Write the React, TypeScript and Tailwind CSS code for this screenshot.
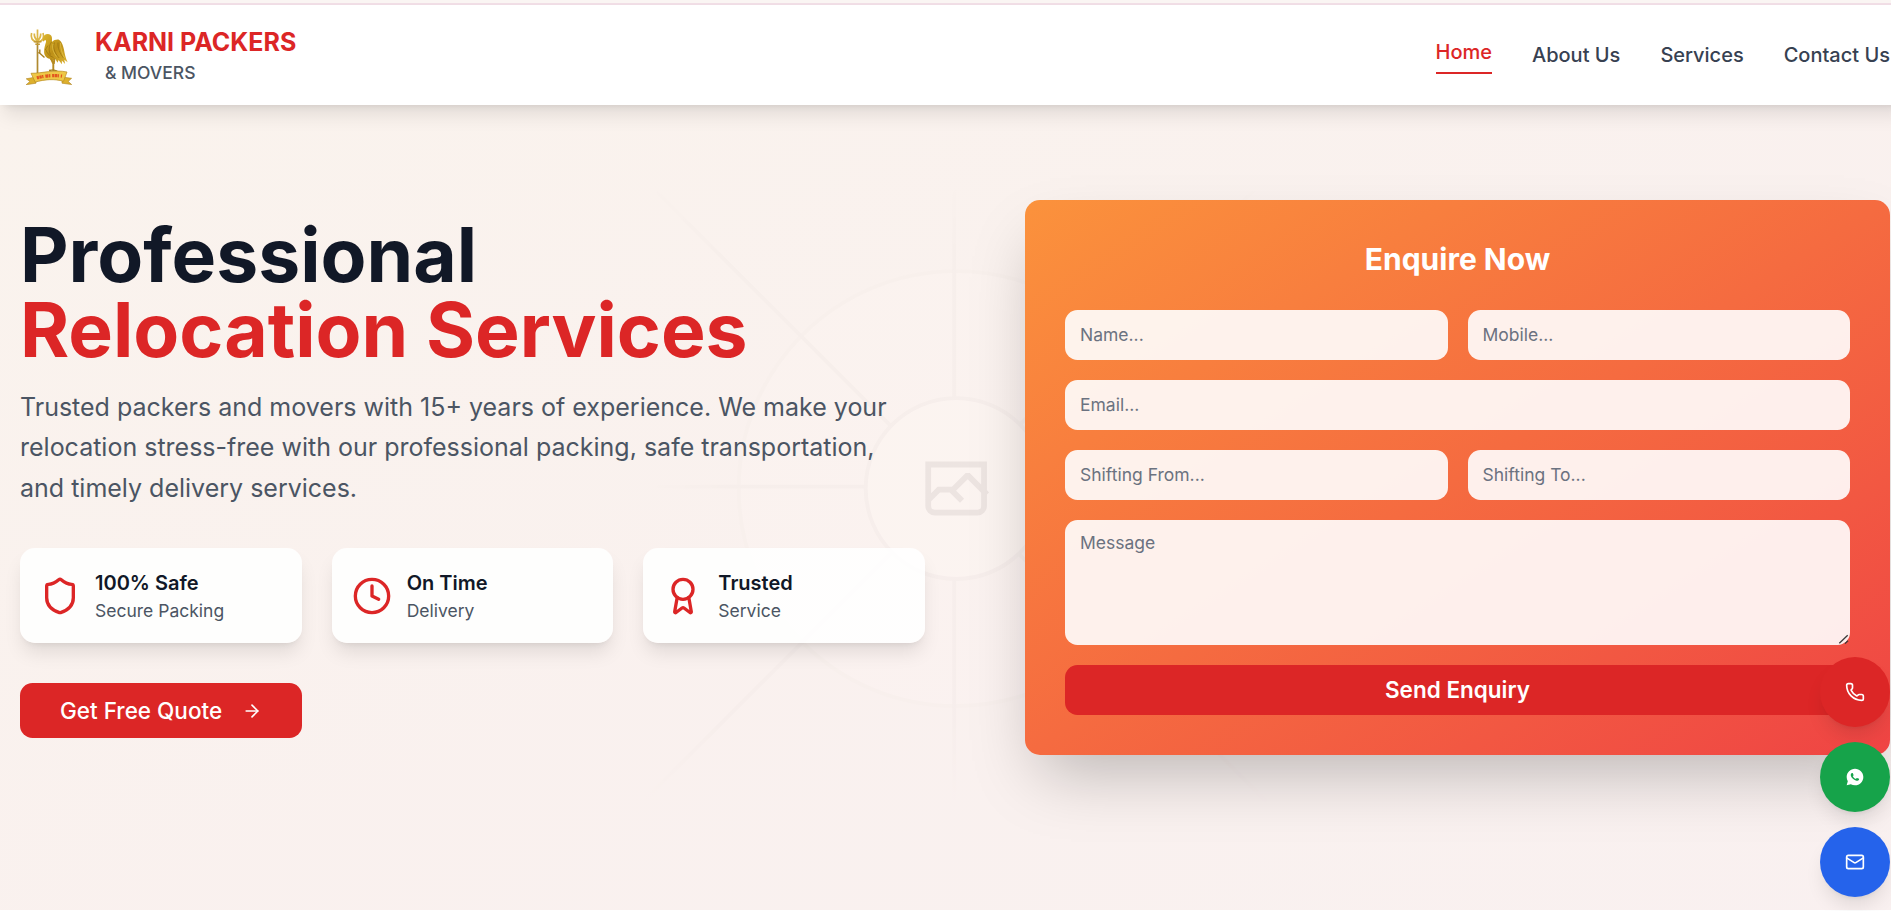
import { ArrowRight, Award, Clock, Mail, Phone, Shield } from 'lucide-react';
import type { LucideIcon } from 'lucide-react';
import { RiWhatsappFill } from 'react-icons/ri';

function Logo() {
  return (
    <svg viewBox="0 0 60 60" className="size-12 shrink-0" fill="none">
      <defs>
        <linearGradient id="gold" x1="0" y1="0" x2="1" y2="1">
          <stop offset="0" stopColor="#dcb52e" />
          <stop offset="0.5" stopColor="#bd9017" />
          <stop offset="1" stopColor="#dcb230" />
        </linearGradient>
      </defs>
      <path d="M17.500 15v33" stroke="#b08a30" strokeWidth="1.700" />
      <path
        d="M11.600 8c-1.200 4.500.4 8.600 5.900 8.800 5.500-.2 7.100-4.300 5.500-8.800M14.300 8.500c-.2 3.500 1.100 5.500 3.200 7.500 2.100-2 3.400-4 3.200-7.500M17.500 4.500v13"
        stroke="#dcb646"
        strokeWidth="1.700"
      />
      <path d="M13.800 16.800h7.600M15.300 19.300h4.600" stroke="#c29a36" strokeWidth="1.500" />
      <path
        d="M23 13.500c.1-3 2.300-4.700 5-4.600 2.800.2 4.200 2.200 4 5 0 1.300-.2 2 .2 2.900 1.600-1.600 3.500-2.400 6.300-2.200 2.900 1.400 4.400 5.200 5.400 9.600.8 4.200 1.600 8.600 3.700 13l-3.300-2.500.8 4.300-3.300-3.400.2 3.600-3.500-4.100-.9 2.600-2.300-3.700c-1.300 1-2.300 1.900-2.900 3.300l-2.800-3.500c-3.200-.8-5.400-3.500-5.500-6.900-.1-3.700 1-7 1.900-9.900.2-1.300-.1-1.900-.8-2.100l-2.300 1.900.1-3.300Z"
        fill="url(#gold)"
      />
      <path
        d="M31.500 17c-2.500 3.600-3.200 8.200-1 12.500M34.500 17.500c-1.800 5-.3 10 4.700 15.500M38 17.500c-.5 5.500 2 11 5.500 15.500M25.500 24c1.500 4.500 4 7 8 8.500M28 20.500l-2.500 4"
        stroke="#8a650b"
        strokeWidth="0.900"
        opacity="0.600"
      />
      <path d="M40.500 18c-.2 5 1.500 10 4 15M33 19c-1 4 0 8 3.500 12.500" stroke="#ecd05a" strokeWidth="0.700" opacity="0.800" />
      <path d="M31 33.500 33.300 39v7M34.500 33l-.7 6" stroke="#b58a20" strokeWidth="1.900" />
      <path d="M29 45.500l4.300-.6 4 1.300M24.500 32.500l-4.700-4.200v-3.800M20 28.500l-1.800-1" stroke="#a88022" strokeWidth="1.400" />
      <path d="M6.200 53.800 16 52v6.200l-9.900 1.600 3.800-3.400-3.700-2.600ZM51.600 53.300 42 52v6.200l9.700 1.400-3.500-3.200 3.400-3.100Z" fill="#ddb02c" stroke="#b08423" strokeWidth="0.600" />
      <path d="M11 48.300c11.500 0 23.500-4 36-1.300l-3.500 9.300c-9-2.600-18.500-2-28.300.8L11 48.300Z" fill="#eec746" stroke="#b88b22" strokeWidth="0.700" />
      <path d="M16.800 52.800c8-1.900 16.500-2.900 25.200-1.600" stroke="#e2571f" strokeWidth="3.200" strokeDasharray="2.200 .5 2.400 .4 1.300 1.900 2.800 .5 1.700 1.800" />
    </svg>
  );
}

const CIRCLE_OUTER =
  'M600.709 736.5c-75.454 0-136.621-61.167-136.621-136.62 0-75.454 61.167-136.621 136.621-136.621 75.453 0 136.62 61.167 136.62 136.621 0 75.453-61.167 136.62-136.62 136.62Z';
const CIRCLE_INNER =
  'M600.709 656.704c-31.384 0-56.825-25.441-56.825-56.824 0-31.384 25.441-56.825 56.825-56.825 31.383 0 56.824 25.441 56.824 56.825 0 31.383-25.441 56.824-56.824 56.824Z';

function FadeStops() {
  return (
    <>
      <stop stopColor="#C9C9C9" stopOpacity="0" />
      <stop offset=".14" stopColor="#C9C9C9" />
      <stop offset=".86" stopColor="#C9C9C9" />
      <stop offset="1" stopColor="#C9C9C9" stopOpacity="0" />
    </>
  );
}

function HeroBackdrop() {
  return (
    <svg
      viewBox="0 0 1200 1200"
      preserveAspectRatio="xMidYMid slice"
      className="absolute inset-0 size-full opacity-20"
      fill="none"
    >
      <defs>
        <linearGradient id="fa" x1="404" y1="796" x2="796" y2="404" gradientUnits="userSpaceOnUse"><FadeStops /></linearGradient>
        <linearGradient id="fb" x1="796.912" y1="599" x2="404.507" y2="599" gradientUnits="userSpaceOnUse"><FadeStops /></linearGradient>
        <linearGradient id="fc" x1="600" y1="403.677" x2="600" y2="796.082" gradientUnits="userSpaceOnUse"><FadeStops /></linearGradient>
        <linearGradient id="fd" x1="403.85" y1="404.3" x2="796.972" y2="797.02" gradientUnits="userSpaceOnUse"><FadeStops /></linearGradient>
      </defs>
      <rect width="1200" height="1200" fill="#EAEAEA" />
      <g opacity=".5">
        <g opacity=".5">
          <path fill="#FAFAFA" d={CIRCLE_OUTER} />
          <path stroke="#C9C9C9" strokeWidth="2.418" d={CIRCLE_OUTER} />
        </g>
        <g strokeWidth="2.418">
          <path stroke="url(#fa)" d="M405 795.500 796.400 404" />
          <path stroke="url(#fb)" d="M404.846 598.671h391.726" />
          <path stroke="url(#fc)" d="M599.5 795.742V404.017" />
          <path stroke="url(#fd)" d="m795.717 796.597-391.441-391.44" />
        </g>
        <path fill="#fff" d={CIRCLE_INNER} />
        <path
          fill="#666"
          fillRule="evenodd"
          d="M616.426 586.58h-31.434v16.176l3.553-3.554.531-.531h9.068l.074-.074 8.463-8.463h2.565l7.18 7.181V586.58Zm-15.715 14.654 3.698 3.699 1.283 1.282-2.565 2.565-1.282-1.283-5.2-5.199h-6.066l-5.514 5.514-.073.073v2.876a2.418 2.418 0 0 0 2.418 2.418h26.598a2.418 2.418 0 0 0 2.418-2.418v-8.317l-8.463-8.463-7.181 7.181-.071.072Zm-19.347 5.442v4.085a6.045 6.045 0 0 0 6.046 6.045h26.598a6.044 6.044 0 0 0 6.045-6.045v-7.108l1.356-1.355-1.282-1.283-.074-.073v-17.989h-38.689v23.43l-.146.146.146.147Z"
        />
        <path stroke="#C9C9C9" strokeWidth="2.418" d={CIRCLE_INNER} />
      </g>
    </svg>
  );
}

function Header() {
  return (
    <header className="relative z-20 flex h-20 items-center justify-between bg-white px-4 shadow-lg">
      <div className="flex items-center gap-3">
        <Logo />
        <div>
          <div className="text-xl font-bold text-[#dc2626]">KARNI PACKERS</div>
          <div className="ml-2 text-sm font-medium text-[#4b5563]">&amp; MOVERS</div>
        </div>
      </div>
      <nav className="flex items-center gap-8 font-medium text-[#374151]">
        <a className="border-b-2 border-[#dc2626] pb-1 text-[#dc2626]">Home</a>
        <a>About Us</a>
        <a>Services</a>
        <a>Contact Us</a>
      </nav>
    </header>
  );
}

function Feature({ icon: Icon, title, text }: { icon: LucideIcon; title: string; text: string }) {
  return (
    <div className="flex items-center gap-3 rounded-xl bg-white/90 p-4 shadow-lg">
      <Icon className="size-8 text-[#dc2626]" />
      <div>
        <div className="font-semibold text-[#111827]">{title}</div>
        <div className="text-sm text-[#4b5563]">{text}</div>
      </div>
    </div>
  );
}

function Field({ placeholder }: { placeholder: string }) {
  return (
    <input
      placeholder={placeholder}
      className="h-10 w-full min-w-0 rounded-[10px] bg-white/90 px-3 text-sm placeholder:text-[#6b7280]"
    />
  );
}

function EnquiryForm() {
  return (
    <form className="ml-8 rounded-xl bg-linear-to-br/srgb from-[#fb923c] to-[#ef4444] p-8 shadow-2xl">
      <h2 className="mb-6 text-center text-2xl font-bold text-white">Enquire Now</h2>
      <div className="flex flex-col gap-4">
        <div className="grid grid-cols-2 gap-4">
          <Field placeholder="Name..." />
          <Field placeholder="Mobile..." />
        </div>
        <Field placeholder="Email..." />
        <div className="grid grid-cols-2 gap-4">
          <Field placeholder="Shifting From..." />
          <Field placeholder="Shifting To..." />
        </div>
        <div className="relative">
          <textarea
            placeholder="Message"
            className="block h-[100px] w-full resize-none rounded-[10px] bg-white/90 px-3 py-2 text-sm placeholder:text-[#6b7280]"
          />
          <svg viewBox="0 0 12 12" className="absolute right-[0.8px] bottom-[0.8px] size-[9.6px]" fill="none">
            <path d="M2.300 11.300 10.700 3.300M8 11.600l3-2.900" stroke="#3b3b3b" strokeWidth="1.300" />
          </svg>
        </div>
        <button type="button" className="h-10 rounded-[10px] bg-[#dc2626] text-lg font-semibold text-white">
          Send Enquiry
        </button>
      </div>
    </form>
  );
}

const roundButton = 'flex size-14 items-center justify-center rounded-full text-white shadow-lg';

export default function App() {
  return (
    <div className="h-[728px] w-[1512px] [zoom:1.25]">
      <div className="h-[728.8px] w-[1512.8px] overflow-clip font-['Inter',sans-serif]">
        <div className="relative w-[1528px]">
          <div className="h-1 border-b-[1.6px] border-[#f3dbe6] bg-[#fff8f6]" />
          <Header />
          <section className="relative h-[698px] bg-linear-to-br/srgb from-[#fff6ef] to-[#fef2f2]">
            <div className="absolute inset-x-0 -top-21 bottom-0">
              <HeroBackdrop />
            </div>
            <div className="relative grid grid-cols-2 items-center gap-12 px-4 pt-[76px]">
              <div>
                <h1 className="mb-4 text-6xl leading-none font-bold text-[#111827]">
                  Professional
                  <span className="block text-[#dc2626]">Relocation Services</span>
                </h1>
                <p className="mb-8 text-xl leading-relaxed text-[#4b5563]">
                  Trusted packers and movers with 15+ years of experience. We make your relocation stress-free with our
                  professional packing, safe transportation, and timely delivery services.
                </p>
                <div className="mb-8 grid grid-cols-3 gap-6">
                  <Feature icon={Shield} title="100% Safe" text="Secure Packing" />
                  <Feature icon={Clock} title="On Time" text="Delivery" />
                  <Feature icon={Award} title="Trusted" text="Service" />
                </div>
                <button
                  type="button"
                  className="flex h-11 items-center gap-4 rounded-[10px] bg-[#dc2626] px-8 text-lg font-medium text-white"
                >
                  Get Free Quote
                  <ArrowRight className="size-4" />
                </button>
              </div>
              <EnquiryForm />
            </div>
          </section>
        </div>
      </div>
      <div className="fixed right-[0.8px] bottom-[11.2px] z-30 flex flex-col gap-3">
        <button type="button" className={`${roundButton} bg-[#dc2626]`}>
          <Phone className="size-4" />
        </button>
        <button type="button" className={`${roundButton} bg-[#16a34a]`}>
          <RiWhatsappFill className="size-4" />
        </button>
        <button type="button" className={`${roundButton} bg-[#2563eb]`}>
          <Mail className="size-4" />
        </button>
      </div>
    </div>
  );
}
